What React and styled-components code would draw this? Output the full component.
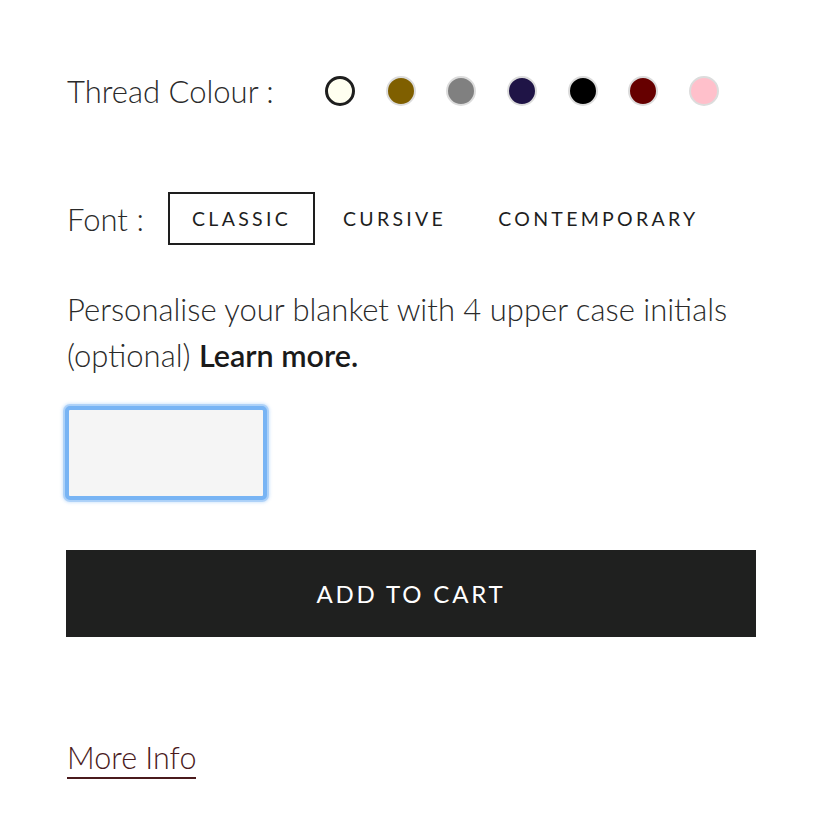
import React from "react";
import styled, { createGlobalStyle } from "styled-components";

const Global = createGlobalStyle`
  html, body { margin: 0; padding: 0; background: #fff; }
  body { font-family: Lato, "Open Sans", sans-serif; color: #222; }
`;

const Page = styled.div`
  width: 690px;
  padding: 67px 0 0 66px;
  display: flex;
  flex-direction: column;
`;

const Row = styled.div`
  display: flex;
  align-items: center;
  height: ${(p) => p.$h}px;
  margin-bottom: ${(p) => p.$mb || 0}px;
`;

const Label = styled.span`
  font-family: Lato, sans-serif;
  font-weight: 300;
  font-size: 31px;
  color: #2a2a2a;
  margin-left: 1px;
  width: ${(p) => p.$w}px;
  flex: none;
`;

const Swatches = styled.div`
  display: flex;
  gap: 30.7px;
`;

const Swatch = styled.span`
  width: 30px;
  height: 30px;
  box-sizing: border-box;
  border-radius: 50%;
  background: ${(p) => p.$c};
  border: ${(p) => (p.$active ? "3px solid #1e1e1e" : "2px solid #dcdcdc")};
`;

const Options = styled.div`
  display: flex;
  align-items: center;
  gap: 4px;
`;

const Option = styled.button`
  font-family: Lato, sans-serif;
  font-weight: 400;
  font-size: 19.5px;
  letter-spacing: 3.3px;
  text-transform: uppercase;
  color: #1e1e1e;
  background: none;
  height: 53px;
  box-sizing: border-box;
  padding: 0 22px;
  border: 2px solid ${(p) => (p.$active ? "#1e1e1e" : "transparent")};
  cursor: pointer;
`;

const Para = styled.p`
  margin: 0 0 0 1px;
  font-family: Lato, sans-serif;
  font-weight: 300;
  font-size: 31px;
  line-height: 46px;
  color: #2a2a2a;
`;

const Learn = styled.a`
  display: inline-block;
  font-weight: 600;
  font-size: 30.5px;
  line-height: 46px;
  color: #1a1a1a;
  text-decoration: none;
`;

const Input = styled.input`
  margin: 28px 0 0 -1px;
  width: 202px;
  height: 94px;
  box-sizing: border-box;
  background: #f5f5f5;
  border: 4px solid #78b4f4;
  border-radius: 5px;
  box-shadow: 0 0 0 2px rgba(120, 180, 244, 0.45), 0 0 3px 3px rgba(120, 180, 244, 0.3);
  outline: none;
`;

const CartButton = styled.button`
  margin-top: 50px;
  width: 690px;
  height: 87px;
  border: none;
  background: #1f201f;
  color: #fff;
  font-family: Lato, sans-serif;
  font-weight: 400;
  font-size: 24px;
  letter-spacing: 2.85px;
  text-transform: uppercase;
  cursor: pointer;
`;

const MoreInfo = styled.a`
  align-self: flex-start;
  margin-top: 103px;
  margin-left: 1px;
  font-family: Lato, sans-serif;
  font-weight: 300;
  font-size: 30.5px;
  line-height: 34px;
  color: #4a1a1c;
  text-decoration: none;
  padding-bottom: 3px;
  border-bottom: 2px solid #4a1a1c;
`;

const colours = ["#fffff0", "#7f5f00", "#808080", "#1f1446", "#000000", "#660000", "#ffc0cb"];

export default function App() {
  return (
    <>
      <Global />
      <Page>
        <Row $h={48} $mb={77}>
          <Label $w={258}>Thread Colour :</Label>
          <Swatches>
            {colours.map((c, i) => (
              <Swatch key={c} $c={c} $active={i === 0} />
            ))}
          </Swatches>
        </Row>
        <Row $h={53} $mb={41}>
          <Label $w={101}>Font :</Label>
          <Options>
            <Option $active>Classic</Option>
            <Option>Cursive</Option>
            <Option>Contemporary</Option>
          </Options>
        </Row>
        <Para>
          Personalise your blanket with 4 upper case initials (optional) <Learn href="#">Learn more.</Learn>
        </Para>
        <Input />
        <CartButton>Add to cart</CartButton>
        <MoreInfo href="#">More Info</MoreInfo>
      </Page>
    </>
  );
}
